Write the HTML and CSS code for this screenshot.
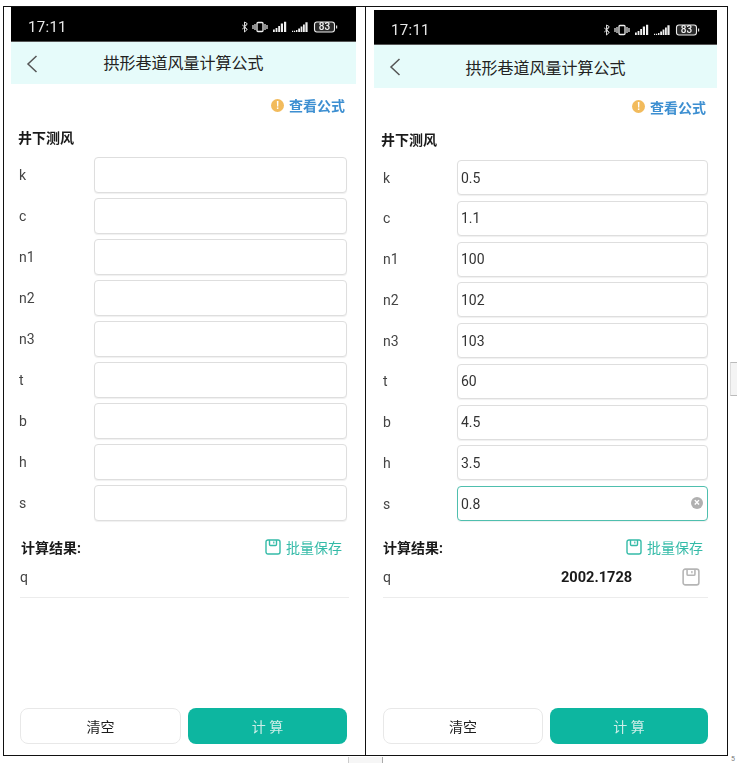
FILE: index.html
```html
<!DOCTYPE html>
<html lang="zh">
<head>
<meta charset="utf-8">
<title>拱形巷道风量计算公式</title>
<link rel="stylesheet" href="styles.css">
</head>
<body>
<svg class="defs" width="0" height="0" aria-hidden="true">
  <symbol id="save" viewBox="0 0 16 16">
    <path d="M3 1h10a2 2 0 0 1 2 2v10a2 2 0 0 1-2 2H3a2 2 0 0 1-2-2V3a2 2 0 0 1 2-2z" fill="none" stroke="currentColor" stroke-width="1.4"/>
    <path d="M4.5 1v4.5a1 1 0 0 0 1 1h5a1 1 0 0 0 1-1V1" fill="none" stroke="currentColor" stroke-width="1.4"/>
    <path d="M8.8 2.6v2" fill="none" stroke="currentColor" stroke-width="1.2"/>
  </symbol>
  <symbol id="back" viewBox="0 0 12 18">
    <path d="M10.5 1L2 9l8.5 8" fill="none" stroke="currentColor" stroke-width="1.5"/>
  </symbol>
  <symbol id="status" viewBox="0 0 96 12">
    <path d="M0 3.5l5 5M0 8.5l5-5M2.5 1v10l2.6-2.5-2.6-3 2.6-3z" fill="none" stroke="#ddd" stroke-width="1"/>
    <path d="M11 4v4M13 3v6M23 3v6M25 4v4" stroke="#eee" stroke-width="1.2"/>
    <rect x="15" y="1.5" width="6" height="9" rx="1" fill="none" stroke="#eee" stroke-width="1.3"/>
    <path d="M31 8.5h1.8V11H31zM33.6 7h1.8v4h-1.8zM36.2 5h1.8v6h-1.8zM38.8 2.5H41V11h-2.2zM42 .8h2.2V11H42z" fill="#f0f0f0"/>
    <path d="M50 9.8h1.2V11H50zM52 9.8h1.2V11H52zM54 9h1.4v2H54zM56.2 7.5H58V11h-1.8zM58.6 5.5h1.8V11h-1.8zM61 3.5h1.8V11H61zM63.4 1.2h2.2V11h-2.2z" fill="#f0f0f0"/>
    <rect x="72.5" y="1" width="20" height="10" rx="2.5" fill="#2a2a2a" stroke="#eee" stroke-width="1.1"/>
    <path d="M94 4.5h1.2v3H94z" fill="#ddd"/>
  </symbol>
</svg>

<main class="sheet">
  <section class="panel panel-a">
    <div class="phone">
      <div class="status"><span class="clock">17:11</span><span class="status-right"><svg class="status-icons"><use href="#status"/></svg><span class="battery">83</span></span></div>
      <header class="nav"><svg class="back"><use href="#back"/></svg><h1>拱形巷道风量计算公式</h1></header>
      <div class="link"><span class="info">!</span><span>查看公式</span></div>
      <h2 class="section">井下测风</h2>
      <div class="form">
        <label class="row"><span>k</span><input class="field" readonly></label>
        <label class="row"><span>c</span><input class="field" readonly></label>
        <label class="row"><span>n1</span><input class="field" readonly></label>
        <label class="row"><span>n2</span><input class="field" readonly></label>
        <label class="row"><span>n3</span><input class="field" readonly></label>
        <label class="row"><span>t</span><input class="field" readonly></label>
        <label class="row"><span>b</span><input class="field" readonly></label>
        <label class="row"><span>h</span><input class="field" readonly></label>
        <label class="row"><span>s</span><input class="field" readonly></label>
      </div>
      <div class="result-head"><strong>计算结果:</strong><span class="batch"><svg class="save"><use href="#save"/></svg>批量保存</span></div>
      <div class="result-row"><span>q</span></div>
      <div class="actions"><button class="btn btn-clear">清空</button><button class="btn btn-calc">计 算</button></div>
    </div>
  </section>

  <section class="panel panel-b">
    <div class="phone">
      <div class="status"><span class="clock">17:11</span><span class="status-right"><svg class="status-icons"><use href="#status"/></svg><span class="battery">83</span></span></div>
      <header class="nav"><svg class="back"><use href="#back"/></svg><h1>拱形巷道风量计算公式</h1></header>
      <div class="link"><span class="info">!</span><span>查看公式</span></div>
      <h2 class="section">井下测风</h2>
      <div class="form">
        <label class="row"><span>k</span><input class="field" readonly value="0.5"></label>
        <label class="row"><span>c</span><input class="field" readonly value="1.1"></label>
        <label class="row"><span>n1</span><input class="field" readonly value="100"></label>
        <label class="row"><span>n2</span><input class="field" readonly value="102"></label>
        <label class="row"><span>n3</span><input class="field" readonly value="103"></label>
        <label class="row"><span>t</span><input class="field" readonly value="60"></label>
        <label class="row"><span>b</span><input class="field" readonly value="4.5"></label>
        <label class="row"><span>h</span><input class="field" readonly value="3.5"></label>
        <label class="row"><span>s</span><span class="field-wrap"><input class="field field-active" readonly value="0.8"><span class="clear">×</span></span></label>
      </div>
      <div class="result-head"><strong>计算结果:</strong><span class="batch"><svg class="save"><use href="#save"/></svg>批量保存</span></div>
      <div class="result-row"><span>q</span><b class="value">2002.1728</b><svg class="save-gray"><use href="#save"/></svg></div>
      <div class="actions"><button class="btn btn-clear">清空</button><button class="btn btn-calc">计 算</button></div>
    </div>
  </section>
</main>

<div class="scrap scrap-side"></div>
<div class="scrap scrap-bottom"></div>
<div class="scrap scrap-corner">5</div>
</body>
</html>
```
FILE: styles.css
```css
* { box-sizing: border-box; }
html, body { margin: 0; padding: 0; background: #fff; overflow: hidden; }
body {
  width: 737px; height: 763px; position: relative;
  font-family: Roboto, "Noto Sans CJK SC", sans-serif;
  color: #1c1c1c; font-size: 14px;
}
.defs { position: absolute; }
.sheet { display: flex; padding: 6px 0 0 3px; }
.panel {
  height: 750px; border: 1px solid #111; background: #fff; display: flex;
}
.panel-a { width: 362px; border-right: 0; padding-left: 7px; }
.panel-b { width: 363px; padding: 3px 0 0 8px; }
.phone { display: flex; flex-direction: column; height: 100%; padding-bottom: 11px; filter: blur(0.35px); }
.panel-a .phone { width: 345px; }
.panel-b .phone { width: 343px; }

.status {
  height: 35px; background: #000; color: #e8e8e8; display: flex; align-items: center;
  justify-content: space-between; border-bottom: 1px solid #555;
}
.clock { font-size: 15px; letter-spacing: .3px; margin-left: 17px; line-height: 1; padding-top: 7px; }
.status-right { position: relative; display: flex; margin-right: 18px; padding-top: 5px; }
.panel-b .status-right { margin-right: 17px; }
.status-icons { width: 96px; height: 12px; display: block; }
.battery {
  position: absolute; right: 4px; top: 5px; width: 19px; text-align: center;
  font-size: 10px; line-height: 12px; font-weight: 500; color: #f2f2f2;
}

.nav { height: 42px; padding-bottom: 2px; background: #e6fbfa; display: flex; align-items: center; position: relative; justify-content: center; }
.panel-b .nav { height: 43px; padding-bottom: 0; }
.nav h1 { margin: 0; font-size: 16px; font-weight: 400; color: #222; }
.back { position: absolute; left: 15px; top: 13px; width: 12px; height: 18px; color: #555; }

.link {
  display: flex; justify-content: flex-end; align-items: center; gap: 5px;
  height: 42px; padding: 0 11px 0 0; color: #3d8fd1; font-weight: 700; font-size: 14px;
}
.panel-b .link { height: 37px; }
.info {
  width: 13px; height: 13px; border-radius: 50%; background: #f2bb5c; color: #fff;
  font-size: 10px; line-height: 13px; text-align: center; font-weight: 700;
}
.section { margin: 0; height: 24px; line-height: 24px; padding-left: 7px; font-size: 14px; font-weight: 700; color: #1a1a1a; }
.panel-b .section { margin-top: 3px; }
.form { display: flex; flex-direction: column; gap: 5px; margin-top: 7px; }
.panel-b .form { gap: 5.75px; margin-top: 8px; }
.row { display: flex; align-items: center; height: 36px; padding-left: 8px; color: #444; font-size: 14px; }
.panel-b .row { height: 35px; padding-left: 9px; }
.row > span:first-child { width: 75px; }
.panel-b .row > span:first-child { width: 74px; }
.field {
  display: block; height: 100%; padding: 0 3px; margin: 0; outline: 0;
  border: 1px solid #dedede; border-radius: 4px; background: #fff;
  font: inherit; font-size: 14px; color: #333; box-shadow: 0 1px 1px #f0f0f0;
}
.panel-a .field { width: 253px; }
.panel-b .field { width: 251px; }
.panel-b .field-active { border-color: #4fbfae; }
.field-wrap { position: relative; display: block; width: 251px; height: 100%; }
.clear {
  position: absolute; right: 5px; top: 11px; width: 12px; height: 12px; border-radius: 50%;
  background: #b0b0b0; color: #fff; font-size: 11px; line-height: 12px; text-align: center; font-weight: 700;
}
.result-head {
  display: flex; justify-content: space-between; align-items: center;
  height: 20px; margin-top: 16px; padding: 0 14px 0 10px;
}
.panel-b .result-head { padding: 0 14px 0 9px; }
.result-head strong { font-weight: 700; font-size: 14px; color: #1a1a1a; }
.batch { display: flex; align-items: center; gap: 5px; color: #35bba8; font-size: 14px; }
.save { width: 16px; height: 16px; color: #35bba8; }
.result-row {
  display: flex; align-items: center; height: 39px; margin: 2px 0 0 9px; padding-bottom: 2px;
  border-bottom: 1px solid #ececec; color: #444;
}
.panel-a .result-row { width: 329px; }
.panel-b .result-row { width: 325px; }
.value { position: absolute; margin-left: 178px; color: #1a1a1a; font-weight: 700; font-size: 14.6px; }
.save-gray { width: 18px; height: 18px; margin-left: auto; margin-right: 8px; color: #b5b5b5; }
.actions { margin-top: auto; display: flex; gap: 7px; padding: 0 9px; }
.btn { flex: 1 1 0; min-width: 0; height: 36px; border-radius: 8px; font: inherit; font-size: 14px; padding: 0; }
.btn-clear { background: #fff; border: 1px solid #e8e8e8; color: #1c1c1c; }
.btn-calc { background: #0db6a0; border: 0; color: #cdeee8; }

.scrap { position: absolute; }
.scrap-side { left: 730px; top: 362px; width: 7px; height: 34px; border-top: 1px solid #bbb; border-bottom: 1px solid #bbb; border-left: 1px solid #ddd; background: #f4f4f4; }
.scrap-bottom { left: 348px; top: 757px; width: 35px; height: 6px; border-left: 1px solid #ccc; border-right: 1px solid #aaa; background: #f6f6f6; }
.scrap-corner { left: 731px; top: 755px; font-size: 7px; line-height: 8px; color: #777; }
```
